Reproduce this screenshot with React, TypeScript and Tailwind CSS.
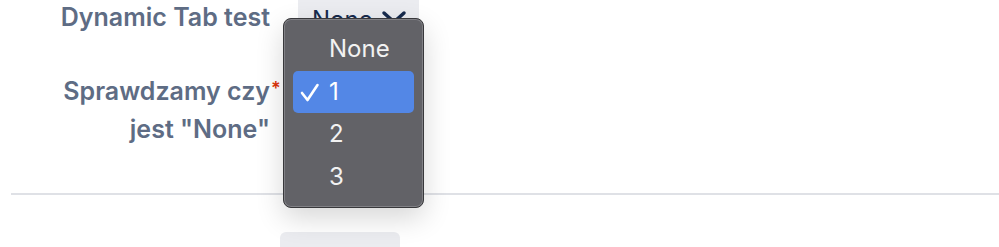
import React from "react";

export default function App() {
  return (
    <div className="relative w-[999px] h-[247px] overflow-hidden bg-white font-['Inter','Noto_Sans',sans-serif]">
      <div className="flex flex-col -mt-[2px]">
        <div className="flex">
          <div className="w-[270px] text-right text-[25px] leading-[38px] font-semibold text-[#5e6c84]">
            Dynamic Tab test
          </div>
          <div className="ml-[28px] -mt-[10px] w-[121px] h-[48px] bg-[#ebecf0] rounded-b-[6px] flex items-end pb-[1px] pl-[14px] gap-[8px] text-[24px] leading-[30px] text-[#172b4d]">
            <span>None</span>
            <svg width="26" height="16" viewBox="0 0 26 16" className="mb-[9px]">
              <path d="M3 3 L13 12 L23 3" fill="none" stroke="#172b4d" strokeWidth="3.5" strokeLinecap="round" strokeLinejoin="round" />
            </svg>
          </div>
        </div>
        <div className="mt-[36px] flex">
          <div className="relative w-[270px] text-right text-[25px] leading-[38px] font-semibold text-[#5e6c84]">
            Sprawdzamy czy
            <br />
            jest "None"
            <span className="absolute left-[271px] top-[-2px] text-[18px] text-[#de350b]">*</span>
          </div>
        </div>
        <div className="mt-[45px] ml-[11px] h-[2px] bg-[#dfe1e6]"></div>
        <div className="mt-[37px] ml-[280px] w-[120px] h-[40px] rounded-[6px] bg-[#ebecf0]"></div>
      </div>

      <div className="absolute left-[283px] top-[18px] w-[141px] h-[190px] rounded-[8px] border border-[#38383b] bg-[#626267] shadow-[inset_0_0_0_1px_#818186,0_10px_28px_rgba(0,0,0,0.16)] px-[9px] py-[9px] flex flex-col text-[24px] text-[#f2f2f2]">
        <div className="h-[43px] flex items-center pl-[36px]">None</div>
        <div className="h-[43px] flex items-center rounded-[5px] bg-[#5387e6] text-white relative">
          <svg width="20" height="20" viewBox="0 0 20 20" className="absolute left-[7px] top-[12px]">
            <path d="M2 10 L7.5 17 L17.5 2" fill="none" stroke="white" strokeWidth="2.6" strokeLinecap="round" strokeLinejoin="round" />
          </svg>
          <span className="pl-[36px]">1</span>
        </div>
        <div className="h-[43px] flex items-center pl-[36px]">2</div>
        <div className="h-[43px] flex items-center pl-[36px]">3</div>
      </div>
    </div>
  );
}
